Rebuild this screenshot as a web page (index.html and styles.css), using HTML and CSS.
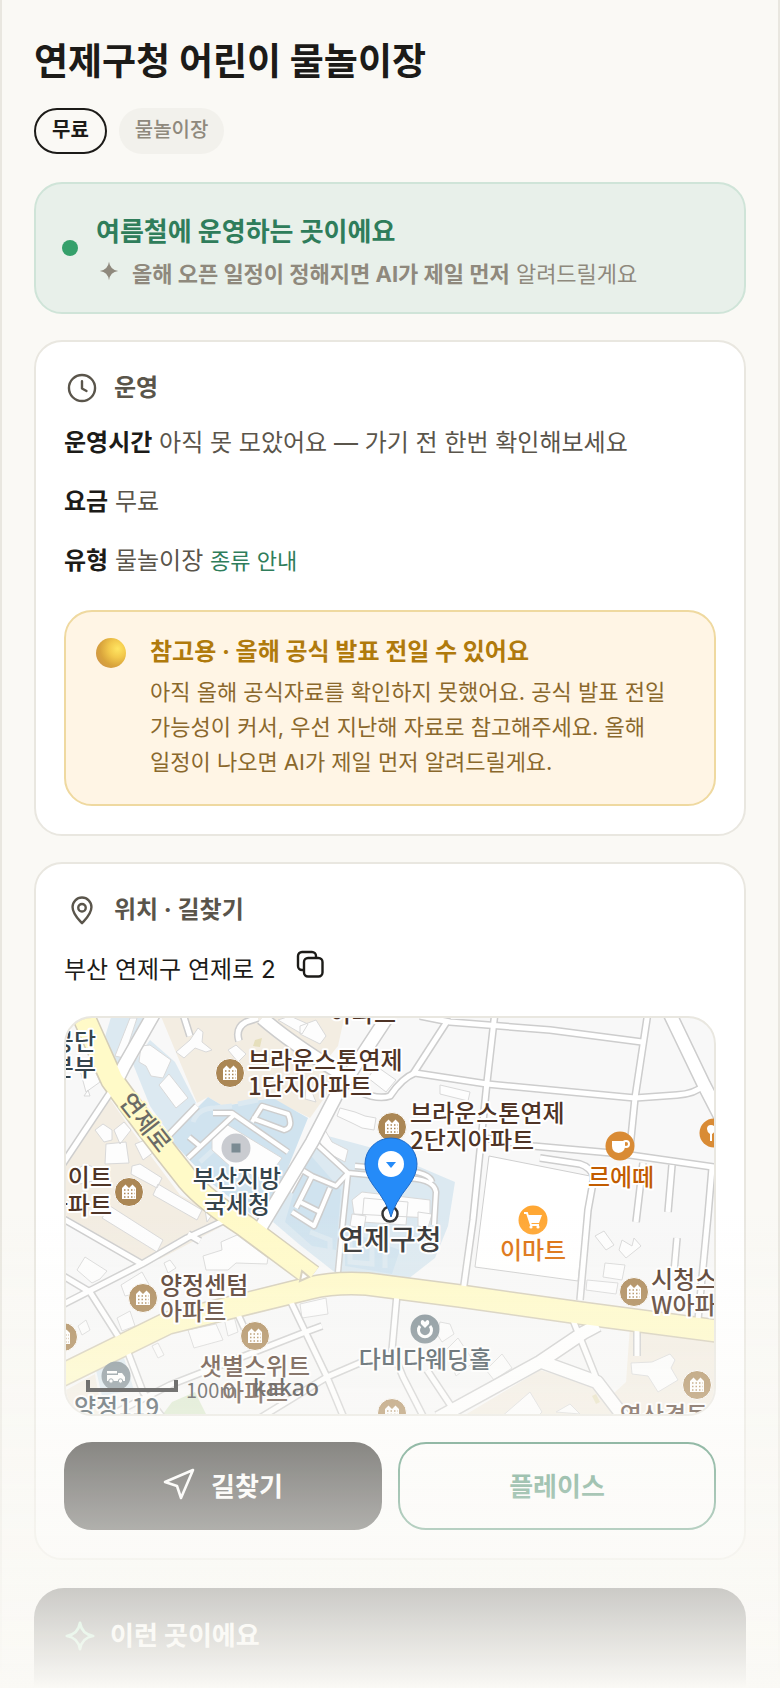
FILE: index.html
```html
<!doctype html>
<html lang="ko">
  <head>
    <meta charset="utf-8">
    <meta name="viewport" content="width=device-width, initial-scale=1">
    <title>연제구청 어린이 물놀이장</title>
    <link rel="stylesheet" href="styles.css">
  </head>
  <body>
    <main class="page">
      <h1>연제구청 어린이 물놀이장</h1>
      <div class="chips">
        <span class="chip chip-free">무료</span>
        <span class="chip">물놀이장</span>
      </div>

      <section class="status">
        <span class="dot"></span>
        <div>
          <h2>여름철에 운영하는 곳이에요</h2>
          <p>
            <svg class="spark" viewBox="0 0 24 24"><path d="M12 3.500Q13 11 20.500 12Q13 13 12 20.500Q11 13 3.500 12Q11 11 12 3.500z"/></svg>
            <span><b>올해 오픈 일정이 정해지면 AI가 제일 먼저</b> 알려드릴게요</span>
          </p>
        </div>
      </section>

      <section class="card">
        <h2 class="card-title">
          <svg class="icon" viewBox="0 0 24 24"><circle cx="12" cy="12" r="8.700"/><path d="M12 7.500V12.300L15 14"/></svg>
          운영
        </h2>
        <div class="rows">
          <p><b>운영시간</b> 아직 못 모았어요 — 가기 전 한번 확인해보세요</p>
          <p><b>요금</b> 무료</p>
          <p><b>유형</b> 물놀이장 <a href="#types">종류 안내</a></p>
        </div>
        <div class="notice">
          <span class="orb"></span>
          <div>
            <h3>참고용 · 올해 공식 발표 전일 수 있어요</h3>
            <p>아직 올해 공식자료를 확인하지 못했어요. 공식 발표 전일 가능성이 커서, 우선 지난해 자료로 참고해주세요. 올해 일정이 나오면 AI가 제일 먼저 알려드릴게요.</p>
          </div>
        </div>
      </section>

      <section class="card">
        <h2 class="card-title">
          <svg class="icon" viewBox="0 0 24 24"><path d="M12 20.800C9.500 18 5.700 14.700 5.700 10a6.300 6.300 0 0 1 12.600 0C18.300 14.700 14.500 18 12 20.800z"/><circle cx="12" cy="10.500" r="2.500"/></svg>
          위치 · 길찾기
        </h2>
        <div class="address">
          <span>부산 연제구 연제로 2</span>
          <button class="copy" type="button" aria-label="주소 복사">
            <svg viewBox="0 0 28 28"><rect x="8" y="8" width="18.500" height="18.500" rx="4"/><path d="M7.500 20H6a4 4 0 0 1-4-4V6a4 4 0 0 1 4-4h10a4 4 0 0 1 4 4v1.500"/></svg>
          </button>
        </div>

        <div class="map">
          <svg viewBox="66 1018 648 396" preserveAspectRatio="xMidYMid slice">
            <defs>
              <g id="streets">
                <path d="M60 1168L112 1090"/>
                <path d="M168 1136L197 1106M183 1014L190 1036"/>
                <path d="M239 1041Q235 1028 246 1022L258 1018"/>
                <path d="M420 1016L450 1022L550 1030L642 1042"/>
                <path d="M448 1020L413 1074"/>
                <path d="M495 1012L487 1082L473 1220L463 1292"/>
                <path d="M648 1012L635 1098L630 1148"/>
                <path d="M360 1092Q378 1100 390 1096Q402 1078 415 1073L487 1084L635 1098L677 1095Q695 1094 704 1085"/>
                <path d="M484 1138L533 1146L623 1154L720 1168"/>
                <path d="M594 1177L588 1210L580 1300"/>
                <path d="M643 1163L636 1222M672 1165L668 1212M712 1168L708 1215L698 1320"/>
                <path d="M677 1238L674 1272M540 1158L580 1164Q590 1167 594 1177"/>
                <path d="M60 1217L142 1264M60 1306L142 1264L187 1238L236 1215M188 1234L200 1241"/>
                <path d="M60 1274L90 1292L118 1336"/>
                <path d="M127 1350L143 1392L163 1418M105 1418L170 1385L303 1333L322 1326"/>
                <path d="M290 1300L327 1377L344 1418M260 1418L327 1377L362 1362"/>
                <path d="M252 1345L236 1310"/>
                <path d="M397 1294L392 1350L403 1377L424 1418M427 1370L455 1412"/>
                <path d="M573 1320L597 1380M637 1330L637 1356"/>
              </g>
              <g id="avenues">
                <path d="M112 1090L124 1066L156 1010"/>
                <path d="M258 1232L312 1142L338 1092L392 1010"/>
                <path d="M262 1018Q292 1044 345 1076"/>
                <path d="M668 1010L704 1085L722 1120"/>
                <path d="M438 1418L540 1362L583 1333L598 1325"/>
                <path d="M542 1362L597 1382L626 1420"/>
              </g>
              <g id="lots">
                <path d="M213 1113L232 1113L288 1152M188 1158L234 1115M189 1137L200 1146"/>
                <path d="M252 1122L262 1106L288 1114Q294 1128 284 1130L252 1118"/>
                <path d="M312 1140L348 1173L402 1178Q434 1178 436 1192L434 1225"/>
                <path d="M355 1166L400 1170Q430 1172 432 1182"/>
                <path d="M348 1173L343 1220L338 1272"/>
                <path d="M348 1173L336 1186L312 1176L296 1208M312 1176L302 1170L290 1192M300 1202L320 1212L330 1188M292 1212L314 1226L320 1212"/>
              </g>
              <g id="highways">
                <path d="M78 1004L112 1080Q145 1126 188 1180Q205 1200 245 1226L312 1276"/>
                <path d="M56 1378L168 1323L310 1288Q335 1282 367 1284L460 1296L580 1313L724 1332"/>
              </g>
              <g id="apartment">
                <circle class="m-home" r="14.500"/>
                <path class="glyph" d="M-7 7V-4L-3.500-7.500L0-4L3.500-7.500L7-4V7z"/>
                <path class="windows" d="M-5-2H6M-5 1.500H6M-5 5H6"/>
              </g>
            </defs>

            <g class="district">
              <path d="M62 1166L108 1096L130 1128L180 1195L230 1222L160 1259H138L62 1213z"/>
              <path d="M160 1014L197 1103L208 1097L223 1106L270 1098L310 1118L330 1090L350 1068L325 1062L338 1046L345 1014z"/>
              <path d="M630 1326L718 1342V1418H622L613 1394L626 1382z"/>
              <path d="M460 1418L540 1370L597 1387L619 1418z"/>
              <path d="M66 1390L95 1374L102 1414H66z"/>
            </g>
            <g class="water-light">
              <path d="M112 1014H145L117 1068L104 1040z"/>
              <path d="M133 1064L150 1040L175 1062L196 1103L168 1132L150 1106z"/>
              <path d="M96 1370L124 1358L134 1390L102 1396z"/>
              <path d="M313 1132L273 1222L300 1245L337 1274L408 1279L435 1258L448 1226L455 1182L380 1150z"/>
            </g>
            <g class="water">
              <path d="M168 1137L208 1097L223 1106L273 1098L308 1118L266 1222L256 1218L210 1182z"/>
              <path d="M306 1150L285 1222L312 1246L336 1250L341 1190z"/>
              <path d="M345 1230L400 1250L392 1274L345 1266z"/>
            </g>
            <path class="lane" d="M193 1122Q198 1108 215 1108L232 1106M200 1162L222 1142M238 1104L258 1100M350 1238V1262L372 1264V1246M385 1250V1268M310 1232L330 1240V1258"/>
            <path class="park" d="M160 1418L172 1402L195 1392L208 1418z"/>
            <path class="park-sand" d="M255 1040L262 1038L260 1047L253 1046zM592 1396L596 1394L600 1402L596 1404z"/>

            <g class="building">
              <path d="M115 1056L130 1018H137L124 1058zM141 1046L150 1045L171 1060L163 1078L151 1076L146 1066L139 1062z"/>
              <path d="M159 1085L169 1074L188 1098L176 1108z"/>
              <path d="M176 1052L190 1040L198 1028L203 1032L202 1042L212 1050L206 1052L195 1048L184 1058zM228 1050L236 1045L246 1054L238 1062z"/>
              <path d="M95 1130L103 1124L112 1130V1140L104 1142zM114 1130L124 1122L131 1130L120 1144zM106 1144L126 1142L129 1163L105 1164z"/>
              <path d="M135 1144L145 1140L154 1152L143 1160zM132 1166L140 1164L162 1178L157 1188L131 1174zM158 1184L202 1210L197 1220L153 1195zM204 1204L214 1212L207 1222z"/>
              <path d="M75 1170L86 1164L100 1170L97 1180L80 1184zM110 1206L163 1240L157 1252L102 1218z"/>
              <path d="M212 1138L226 1124L282 1158L266 1180L232 1168L212 1150z"/>
              <path d="M80 1070L90 1060L100 1082L86 1092zM84 1096L88 1090L90 1096z"/>
              <path d="M77 1270L85 1257L107 1271L100 1279L92 1283zM121 1285L142 1272L152 1290L125 1296zM164 1263L170 1260L176 1268L168 1273z"/>
              <path d="M203 1256L222 1250L221 1242L237 1235L268 1258L267 1264L236 1263L228 1270L206 1270z"/>
              <path d="M117 1318L130 1311L135 1326L122 1331zM78 1326L86 1320L90 1330L82 1335zM152 1346L158 1343L164 1355L158 1358zM188 1330L216 1324L223 1340L194 1348zM224 1318L234 1316L238 1332L228 1336z"/>
              <path d="M300 1026L316 1020L326 1036L320 1044L300 1034zM278 1020L290 1016L308 1024L302 1034zM306 1086L312 1092L316 1102L305 1099z"/>
              <path d="M340 1108L355 1112L365 1116L376 1118L374 1130L362 1128L352 1123L337 1116zM440 1085L470 1092L468 1101L440 1094z"/>
              <path d="M316 1136L325 1130L332 1142L348 1150L345 1162L326 1152zM352 1200L362 1192L430 1200V1218L354 1214zM364 1198L408 1202L406 1225L362 1222z"/>
              <path d="M352 1214L366 1216L364 1228L350 1226zM418 1212L432 1214L428 1228L418 1226z"/>
              <path d="M595 1236L604 1231L614 1245L606 1250zM619 1250L622 1240L632 1246L634 1238L641 1246L626 1258zM605 1263L625 1265L622 1280L603 1277zM587 1280L618 1283L616 1294L586 1290z"/>
              <path d="M300 1304L326 1298L328 1314L302 1318zM440 1322L450 1324L454 1334L442 1342L437 1334zM446 1350L458 1338L474 1362L456 1376zM486 1370L502 1354L512 1368L494 1380z"/>
              <path d="M631 1363L652 1362L670 1354L675 1360L671 1368L678 1380L658 1392L648 1376L632 1374zM500 1418L530 1392L542 1412L536 1418zM556 1412L570 1404L580 1414z"/>
              <path d="M368 1078L376 1066L396 1080L386 1092z"/>
            </g>
            <path class="mart" d="M489 1156L590 1176L578 1281L475 1267z"/>

            <use href="#lots" class="lots-edge"/>
            <use href="#lots" class="lots"/>
            <use href="#streets" class="street-edge"/>
            <use href="#avenues" class="avenue-edge"/>
            <use href="#highways" class="highway-edge"/>
            <use href="#streets" class="street"/>
            <use href="#avenues" class="avenue"/>
            <use href="#highways" class="highway"/>
            <path class="island" d="M300 1281L302 1271L309 1277z"/>

            <use href="#apartment" x="230" y="1073"/>
            <use href="#apartment" x="129" y="1192"/>
            <use href="#apartment" x="392" y="1127"/>
            <use href="#apartment" x="634" y="1292"/>
            <use href="#apartment" x="143" y="1298"/>
            <use href="#apartment" x="255" y="1336"/>
            <use href="#apartment" x="63" y="1337"/>
            <use href="#apartment" x="697" y="1385"/>
            <use href="#apartment" x="392" y="1413"/>
            <g transform="translate(236 1148)"><circle class="m-office" r="14.500"/><path class="m-block" d="M-4.500-4.500h9v9h-9z"/></g>
            <g transform="translate(620 1146)"><circle class="m-food" r="14.500"/><path class="glyph" d="M-8-5H5V0Q5 6-1.500 7Q-8 6-8 0z"/><circle class="glyph-line" cx="6" cy="-2" r="3"/></g>
            <g transform="translate(714 1133)"><circle class="m-food" r="14.500"/><path class="glyph" d="M-7-4a4 4 0 0 1 8 0Q1-1-2 1V8H-4V1Q-7-1-7-4z"/></g>
            <g transform="translate(533 1220)"><circle class="m-mart" r="14.500"/><path class="glyph" d="M-5-5H9L6 3H-3z"/><path class="glyph-line" d="M-9-7H-6L-2 5H6"/><circle class="glyph" cx="-2" cy="7" r="1.600"/><circle class="glyph" cx="5" cy="7" r="1.600"/></g>
            <g transform="translate(116 1376)"><circle class="m-public" r="14.500"/><path class="glyph" d="M-9-5H1V-2.500H-9zM-9-1H2V-3H6L9 1V5H-9z"/><circle class="wheel" cx="-5" cy="5" r="2.200"/><circle class="wheel" cx="4.500" cy="5" r="2.200"/></g>
            <g transform="translate(425 1329)"><circle class="m-public" r="14.500"/><path class="ring" d="M-5-3A6.500 6.500 0 1 0 5-3"/><path class="glyph" d="M0-1L-4-5Q-5-9-2-9L0-7L2-9Q5-9 4-5z"/></g>

            <g class="label">
              <text class="civic" x="96" y="1050" text-anchor="end">공단</text>
              <text class="civic" x="96" y="1076" text-anchor="end">본부</text>
              <text x="248" y="1069">브라운스톤연제</text>
              <text x="248" y="1095">1단지아파트</text>
              <text x="363" y="1022" text-anchor="middle">아파트</text>
              <text x="410" y="1122">브라운스톤연제</text>
              <text x="410" y="1149">2단지아파트</text>
              <text class="civic" x="237" y="1187" text-anchor="middle">부산지방</text>
              <text class="civic" x="237" y="1213" text-anchor="middle">국세청</text>
              <text x="112" y="1186" text-anchor="end">이트</text>
              <text x="112" y="1214" text-anchor="end">아파트</text>
              <text class="food" x="621" y="1186" text-anchor="middle">르에떼</text>
              <text class="shop" x="533" y="1259" text-anchor="middle">이마트</text>
              <text x="651" y="1288">시청스위트</text>
              <text x="651" y="1314">W아파트</text>
              <text x="160" y="1294">양정센텀</text>
              <text x="160" y="1320">아파트</text>
              <text x="255" y="1375" text-anchor="middle">샛별스위트</text>
              <text x="255" y="1401" text-anchor="middle">아파트</text>
              <text class="civic" x="74" y="1416">양정119</text>
              <text class="civic" x="425" y="1368" text-anchor="middle">다비다웨딩홀</text>
              <text x="664" y="1424" text-anchor="middle">연산경동</text>
              <text class="street-name" transform="translate(145 1123) rotate(52)" x="0" y="8" text-anchor="middle">연제로</text>
            </g>

            <circle class="target" cx="390" cy="1214" r="7.500"/>
            <text class="place" x="390" y="1250" text-anchor="middle">연제구청</text>
            <path class="pin" d="M391 1217Q388 1204 373 1185Q365 1174 365 1164A26 26 0 0 1 417 1164Q417 1174 409 1185Q394 1204 391 1217z"/>
            <circle class="glyph" cx="391" cy="1164" r="13"/>
            <path class="pin-arrow" d="M386 1162H396L391 1168z"/>

            <path class="scale" d="M88 1380V1390H176V1380"/>
            <text class="scale-text" x="186" y="1398">100m</text>
            <text class="brand" x="253" y="1396">kakao</text>
          </svg>
        </div>

        <div class="actions">
          <button class="btn btn-dark" type="button">
            <svg viewBox="0 0 32 32"><path d="M30 2L2 14L14 18L18 30z"/></svg>
            길찾기
          </button>
          <button class="btn btn-line" type="button">플레이스</button>
        </div>
      </section>

      <section class="about">
        <h2>
          <svg viewBox="0 0 24 24"><path d="M12 3.200Q13.200 10.800 20.800 12Q13.200 13.200 12 20.800Q10.800 13.200 3.200 12Q10.800 10.800 12 3.200z"/></svg>
          이런 곳이에요
        </h2>
      </section>
    </main>
    <div class="fade"></div>
  </body>
</html>
```
FILE: styles.css
```css
* {
  box-sizing: border-box;
}
body {
  margin: 0;
  background: #faf9f5;
  color: #1c1b18;
  font-family: Inter, 'Noto Sans CJK KR', sans-serif;
  font-size: 24px;
  line-height: 40px;
  word-break: keep-all;
}
h1, h2, h3, p {
  margin: 0;
}
button {
  font-family: inherit;
  cursor: pointer;
}
svg {
  flex: none;
}

.page {
  display: flex;
  flex-direction: column;
  min-height: 100vh;
  padding: 36px 32px 0;
  border-left: 2px solid #e9e7e0;
  border-right: 2px solid #e9e7e0;
}
h1 {
  font-size: 37px;
  line-height: 52px;
}
.chips {
  display: flex;
  gap: 12px;
  margin-top: 20px;
}
.chip {
  padding: 6px 16px 8px;
  border-radius: 23px;
  background: #f2f1ec;
  color: #8f897d;
  font-size: 20px;
  font-weight: 500;
  line-height: 32px;
}
.chip-free {
  padding: 4px 16px 6px;
  border: 2px solid #1c1b18;
  background: none;
  color: #1c1b18;
  font-weight: 700;
}

/* status banner */
.status {
  display: flex;
  align-items: center;
  gap: 18px;
  margin-top: 28px;
  padding: 20px 26px;
  border: 2px solid #cfe4d8;
  border-radius: 28px;
  background: #e8f0ea;
}
.dot {
  flex: none;
  width: 16px;
  height: 16px;
  border-radius: 50%;
  background: #35a06b;
}
.status h2 {
  padding-top: 4px;
  color: #2f7d5b;
  font-size: 26px;
  line-height: 48px;
}
.status p {
  display: flex;
  gap: 10px;
  color: #8f897d;
  font-size: 22px;
  line-height: 36px;
}
.spark {
  width: 26px;
  height: 30px;
  fill: #8f897d;
}

/* cards */
.card {
  margin-top: 26px;
  padding: 28px;
  border: 2px solid #e9e7e0;
  border-radius: 28px;
  background: #fff;
}
.card-title {
  display: flex;
  align-items: center;
  gap: 14px;
  color: #5a554b;
  font-size: 24px;
  line-height: 36px;
}
.icon {
  width: 36px;
  height: 36px;
  fill: none;
  stroke: #5a554b;
  stroke-width: 1.6;
  stroke-linecap: round;
  stroke-linejoin: round;
}
.rows {
  display: grid;
  gap: 19px;
  margin-top: 17px;
  color: #5a554b;
}
.rows b {
  color: #1c1b18;
}
.rows a {
  color: #2f7d5b;
  font-size: 22px;
  text-decoration: none;
}
.notice {
  display: flex;
  gap: 24px;
  margin-top: 29px;
  padding: 22px 30px 24px;
  border: 2px solid #efd9a0;
  border-radius: 28px;
  background: #fff5e5;
}
.orb {
  flex: none;
  width: 30px;
  height: 30px;
  margin-top: 4px;
  border-radius: 50%;
  background: radial-gradient(circle at 72% 36%, #ffe562 0, #f3c94c 30%, #d9a43c 60%, #cf9548 85%, #cc7a5c 100%);
}
.notice h3 {
  color: #b07a0c;
  font-size: 24px;
  line-height: 36px;
}
.notice p {
  margin-top: 5px;
  color: #8a682c;
  font-size: 22px;
  line-height: 35px;
}
.address {
  display: flex;
  align-items: flex-start;
  gap: 20px;
  margin-top: 22px;
}
.copy {
  padding: 0;
  border: 0;
  background: none;
}
.copy svg {
  display: block;
  width: 28px;
  height: 28px;
  fill: none;
  stroke: #1c1b18;
  stroke-width: 2.4;
  stroke-linecap: round;
}

/* map */
.map {
  height: 400px;
  margin-top: 26px;
  overflow: hidden;
  border: 2px solid #e9e7e0;
  border-radius: 28px;
  background: #f8f8f8;
  font-family: 'Noto Sans CJK KR', sans-serif;
}
.map svg {
  display: block;
  width: 100%;
  height: 100%;
}
.district { fill: #f3ede2; }
.water { fill: #d0e3ef; }
.water-light { fill: #dce9f1; }
.lane { fill: none; stroke: #dce9f1; stroke-width: 5; }
.park { fill: #d9e8cb; }
.park-sand { fill: #e6dfbc; }
.building { fill: #fdfdfd; stroke: #d9d9d9; stroke-width: 1; }
.mart { fill: #fff; stroke: #cfcfcf; }
.street, .street-edge, .avenue, .avenue-edge, .highway, .highway-edge, .lots, .lots-edge {
  fill: none;
  stroke: #fff;
  stroke-linejoin: round;
}
.street-edge, .avenue-edge { stroke: #cdcdcd; }
.street { stroke-width: 5; }
.street-edge { stroke-width: 8; }
.avenue { stroke-width: 12; }
.avenue-edge { stroke-width: 15; }
.lots { stroke-width: 4; }
.lots-edge { stroke: #cdcdcd; stroke-width: 7; }
.highway { stroke: #fffac8; stroke-width: 21; }
.highway-edge { stroke: #d4cdb8; stroke-width: 24; }
.island { fill: #fff; stroke: #d4cdb8; stroke-width: 2; }
.m-home { fill: #ab8755; stroke: #fff; stroke-width: 1; }
.glyph { fill: #fff; }
.windows { stroke: #ab8755; stroke-width: 1.5; stroke-dasharray: 1.5 2; }
.glyph-line, .ring { fill: none; stroke: #fff; stroke-width: 2; }
.ring { stroke-width: 3; }
.m-office { fill: #c9cbd0; }
.m-block { fill: #7b8b93; }
.m-food { fill: #d98b35; }
.m-mart { fill: #ffa733; }
.m-public { fill: #7e8c93; }
.wheel { fill: #fff; stroke: #7e8c93; stroke-width: 1; }
.label text, .place {
  fill: #4f3426;
  stroke: #fff;
  stroke-width: 4;
  stroke-linejoin: round;
  paint-order: stroke;
  font-size: 24px;
  font-weight: 500;
}
.label .civic { fill: #35444c; }
.label .food { fill: #c25c00; }
.label .shop { fill: #dd700c; }
.label .street-name { fill: #6b6b66; stroke: #fffac8; }
.place { fill: #333; font-size: 28px; }
.target { fill: #fff; stroke: #333; stroke-width: 2.5; }
.pin { fill: #258bf8; stroke: #1f6bc8; stroke-width: 1; }
.pin-arrow { fill: #258bf8; }
.scale { fill: none; stroke: #222; stroke-width: 4; }
.scale-text { fill: #333; font-size: 20px; }
.brand { fill: #222; font: 500 23px 'Noto Sans', sans-serif; }

.actions {
  display: grid;
  grid-template-columns: 1fr 1fr;
  gap: 16px;
  margin-top: 26px;
}
.btn {
  display: flex;
  align-items: center;
  justify-content: center;
  gap: 16px;
  height: 88px;
  padding: 0 0 4px;
  border: 2px solid #1c1b18;
  border-radius: 28px;
  font-size: 26px;
  font-weight: 700;
}
.btn svg {
  width: 32px;
  height: 32px;
  fill: none;
  stroke: #fff;
  stroke-width: 2.6;
  stroke-linejoin: round;
}
.btn-dark {
  background: #1c1b18;
  color: #fff;
}
.btn-line {
  border-color: #2f7d5b;
  background: #fff;
  color: #2f7d5b;
}

.about {
  flex: 1;
  margin-top: 28px;
  padding: 30px 28px 0;
  border-radius: 30px 30px 0 0;
  background: #1c1b18;
  color: #fff;
}
.about h2 {
  display: flex;
  align-items: center;
  gap: 12px;
  font-size: 26px;
  line-height: 36px;
}
.about svg {
  width: 36px;
  height: 36px;
  fill: none;
  stroke: #7be0a8;
  stroke-width: 1.8;
  stroke-linejoin: round;
}

/* bottom of the sheet dissolves into the page */
.fade {
  position: fixed;
  right: 0;
  bottom: 0;
  left: 0;
  height: 480px;
  background: linear-gradient(rgba(250, 249, 245, 0), #faf9f5);
  pointer-events: none;
}
```
